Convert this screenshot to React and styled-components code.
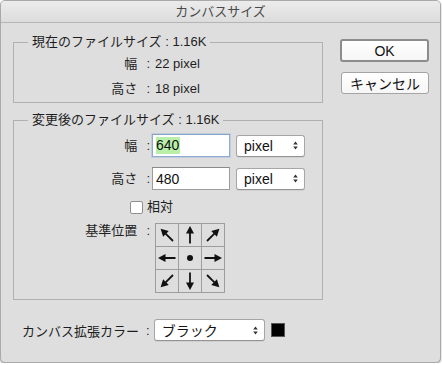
import React from "react";
import styled, { createGlobalStyle } from "styled-components";

const GlobalStyle = createGlobalStyle`
  html, body {
    margin: 0;
    padding: 0;
    background: #ffffff;
  }
  body {
    font-family: "Liberation Sans", "Noto Sans CJK JP", sans-serif;
    font-size: 13px;
    color: #1e1e1e;
  }
`;

const Window = styled.div`
  box-sizing: border-box;
  width: 441px;
  height: 363px;
  background: #dedede;
  border: 1px solid #a9a9a9;
  border-radius: 5px;
  box-shadow: 0 1px 2px rgba(0, 0, 0, 0.35);
  overflow: hidden;
`;

const TitleBar = styled.div`
  height: 21px;
  line-height: 21px;
  text-align: center;
  color: #4a4a4a;
  background: linear-gradient(#ececec, #dcdcdc);
  border-bottom: 1px solid #b5b5b5;
`;

const Body = styled.div`
  padding: 11px 11px 0 12px;
`;

const Top = styled.div`
  display: flex;
  align-items: flex-start;
`;

const Main = styled.div`
  width: 312px;
`;

const Group = styled.fieldset`
  margin: ${(p) => (p.$second ? "9px 0 0" : "0")};
  padding: ${(p) => (p.$second ? "6px 0 6px" : "3px 0 2px")};
  border: 1px solid #b0b0b0;
  min-width: 0;
`;

const Legend = styled.legend`
  margin-left: 14px;
  padding: 0 4px;
  line-height: 16px;
`;

const Row = styled.div`
  display: flex;
  align-items: ${(p) => (p.$top ? "flex-start" : "center")};
  height: ${(p) => p.$h || 22}px;
  margin-top: ${(p) => p.$mt || 0}px;
`;

const FieldLabel = styled.div`
  width: 136px;
  display: flex;
  justify-content: flex-end;
  line-height: 16px;
  flex-shrink: 0;
`;

const Colon = styled.span`
  margin-left: ${(p) => p.$ml ?? 9}px;
`;

const Value = styled.span`
  margin-left: 5px;
  line-height: 16px;
`;

const TextBox = styled.div`
  box-sizing: border-box;
  width: 78px;
  height: 23px;
  margin-left: 2px;
  padding-left: 3px;
  display: flex;
  align-items: center;
  background: #ffffff;
  border: 1px solid ${(p) => (p.$focus ? "#8eabd3" : "#9c9c9c")};
  border-top-color: ${(p) => (p.$focus ? "#86a3cd" : "#8a8a8a")};
  box-shadow: ${(p) => (p.$focus ? "0 0 0 1px rgba(142, 171, 211, 0.35)" : "none")};
  color: #111;
  font-size: 14px;
`;

const Selected = styled.span`
  background: #b9efa9;
  line-height: 17px;
  padding: 0 1px 0 0;
`;

const SelectBox = styled.div`
  box-sizing: border-box;
  width: ${(p) => p.$w}px;
  height: ${(p) => p.$h || 22}px;
  margin-left: ${(p) => p.$ml}px;
  padding: 0 6px 0 7px;
  display: flex;
  align-items: center;
  justify-content: space-between;
  background: #ffffff;
  border: 1px solid #a6a6a6;
  border-bottom-color: #939393;
  border-radius: 3px;
  box-shadow: 0 1px 0 rgba(0, 0, 0, 0.06);
  color: #111;
  font-size: 14px;
`;

const CheckRow = styled.label`
  display: flex;
  align-items: center;
  margin-left: 116px;
  gap: 4px;
  line-height: 16px;
`;

const CheckBox = styled.span`
  box-sizing: border-box;
  width: 13px;
  height: 13px;
  background: #ffffff;
  border: 1px solid #8f8f8f;
  border-radius: 2px;
`;

const AnchorGrid = styled.div`
  display: grid;
  grid-template-columns: repeat(3, 22px);
  grid-auto-rows: 22px;
  gap: 1px;
  padding: 1px;
  margin-left: 5px;
  background: #9d9d9d;
`;

const Cell = styled.div`
  display: flex;
  align-items: center;
  justify-content: center;
  background: #dedede;
`;

const ArrowSvg = styled.svg`
  transform: rotate(${(p) => p.$deg}deg);
`;

const Dot = styled.span`
  width: 6px;
  height: 6px;
  border-radius: 50%;
  background: #111;
`;

const Buttons = styled.div`
  margin: 5px 0 0 17px;
  display: flex;
  flex-direction: column;
  gap: 10px;
`;

const Button = styled.button`
  box-sizing: border-box;
  width: ${(p) => (p.$default ? 89 : 88)}px;
  height: ${(p) => (p.$default ? 23 : 22)}px;
  margin-left: ${(p) => (p.$default ? 0 : 1)}px;
  padding: 0;
  font: inherit;
  font-size: 14px;
  color: #111;
  background: linear-gradient(#ffffff, #f6f6f6);
  border: ${(p) => (p.$default ? "2px solid #8c8c8c" : "1px solid #a4a4a4")};
  border-radius: 3px;
`;

const Footer = styled.div`
  display: flex;
  align-items: center;
  height: 22px;
  margin: 19px 0 0 9px;
`;

const Swatch = styled.span`
  width: 14px;
  height: 14px;
  margin-left: 6px;
  background: #000;
  border: 1px solid #555;
  box-sizing: border-box;
`;

const Stepper = () => (
  <svg width="5" height="9" viewBox="0 0 5 9">
    <path d="M2.5 0.5 L4.8 3.4 L0.2 3.4 Z M2.5 8.5 L4.8 5.6 L0.2 5.6 Z" fill="#333" />
  </svg>
);

const Arrow = ({ deg }) => (
  <ArrowSvg $deg={deg} width="22" height="22" viewBox="0 0 22 22">
    <path d="M11 2 L15 9.5 L7 9.5 Z" fill="#111" />
    <line x1="11" y1="9" x2="11" y2="19.5" stroke="#111" strokeWidth="1.8" />
  </ArrowSvg>
);

const anchors = [-45, 0, 45, -90, null, 90, -135, 180, 135];

export default function App() {
  return (
    <>
      <GlobalStyle />
      <Window>
        <TitleBar>カンバスサイズ</TitleBar>
        <Body>
          <Top>
            <Main>
              <Group>
                <Legend>現在のファイルサイズ : 1.16K</Legend>
                <Row>
                  <FieldLabel>
                    幅<Colon>:</Colon>
                  </FieldLabel>
                  <Value>22 pixel</Value>
                </Row>
                <Row $mt={3}>
                  <FieldLabel>
                    高さ<Colon>:</Colon>
                  </FieldLabel>
                  <Value>18 pixel</Value>
                </Row>
              </Group>

              <Group $second>
                <Legend>変更後のファイルサイズ : 1.16K</Legend>
                <Row $h={23}>
                  <FieldLabel>
                    幅<Colon>:</Colon>
                  </FieldLabel>
                  <TextBox $focus>
                    <Selected>640</Selected>
                  </TextBox>
                  <SelectBox $w={69} $ml={6}>
                    pixel
                    <Stepper />
                  </SelectBox>
                </Row>
                <Row $h={23} $mt={10}>
                  <FieldLabel>
                    高さ<Colon>:</Colon>
                  </FieldLabel>
                  <TextBox>480</TextBox>
                  <SelectBox $w={69} $ml={6}>
                    pixel
                    <Stepper />
                  </SelectBox>
                </Row>
                <Row $h={18} $mt={8}>
                  <CheckRow>
                    <CheckBox />
                    相対
                  </CheckRow>
                </Row>
                <Row $h={70} $mt={7} $top>
                  <FieldLabel>
                    基準位置<Colon>:</Colon>
                  </FieldLabel>
                  <AnchorGrid>
                    {anchors.map((deg, i) => (
                      <Cell key={i}>{deg === null ? <Dot /> : <Arrow deg={deg} />}</Cell>
                    ))}
                  </AnchorGrid>
                </Row>
              </Group>
            </Main>

            <Buttons>
              <Button $default>OK</Button>
              <Button>キャンセル</Button>
            </Buttons>
          </Top>

          <Footer>
            カンバス拡張カラー<Colon $ml={7}>:</Colon>
            <SelectBox $w={111} $ml={4}>
              ブラック
              <Stepper />
            </SelectBox>
            <Swatch />
          </Footer>
        </Body>
      </Window>
    </>
  );
}
